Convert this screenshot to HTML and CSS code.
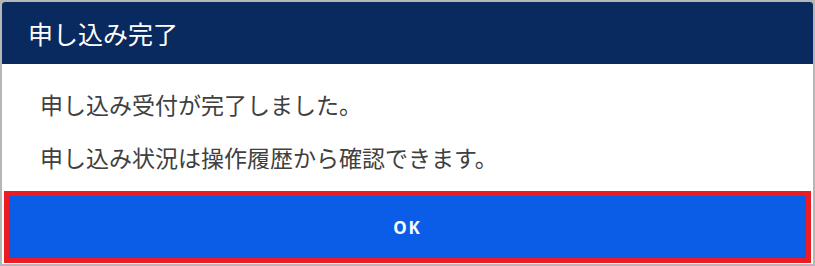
FILE: index.html
```html
<!doctype html>
<html lang="ja">
<head>
    <meta charset="utf-8">
    <title>申し込み完了</title>
    <link rel="stylesheet" href="styles.css">
</head>
<body>

<!-- 完了ダイアログ -->
<div class="dialog" role="dialog" aria-labelledby="dialog-title">
    <div class="dialog-header">
        <h1 class="dialog-title" id="dialog-title">申し込み完了</h1>
    </div>
    <div class="dialog-body">
        <p>申し込み受付が完了しました。</p>
        <p>申し込み状況は操作履歴から確認できます。</p>
    </div>
    <button type="button" class="dialog-btn">OK</button>
</div>

</body>
</html>
```

FILE: styles.css
```css
*, *::before, *::after {
    box-sizing: border-box;
}

:root {
    --navy: #092a5f;
    --blue: #0b5ce6;
    --focus: #ed1c24;
    --text: #404040;
}

body {
    margin: 0;
    padding: 2px 2px 0 2px;
    background: #b6b6b6;
    font-family: "Noto Sans CJK JP", "Noto Sans", sans-serif;
}

.dialog {
    width: 811px;
    height: 262px;
    background: #fff;
    border-radius: 3px 3px 0 0;
    overflow: hidden;
    display: flex;
    flex-direction: column;
}

.dialog-header {
    height: 62px;
    background: var(--navy);
    display: flex;
    align-items: center;
    padding-left: 26px;
}

.dialog-title {
    margin: 0;
    color: #fff;
    font-size: 25px;
    font-weight: 400;
    line-height: 1;
}

.dialog-body {
    display: flex;
    flex-direction: column;
    gap: 20px;
    padding: 24px 38px 17px;
    color: var(--text);
    font-size: 23px;
    line-height: 33px;
}

.dialog-body p {
    margin: 0;
}

/* кнопка с рамкой фокуса */
.dialog-btn {
    margin: 0 2px;
    height: 72px;
    border: 5px solid var(--focus);
    background: var(--blue);
    color: #fff;
    font-family: "Noto Sans", sans-serif;
    font-size: 17px;
    font-weight: 700;
    letter-spacing: 2px;
    cursor: pointer;
}
```
